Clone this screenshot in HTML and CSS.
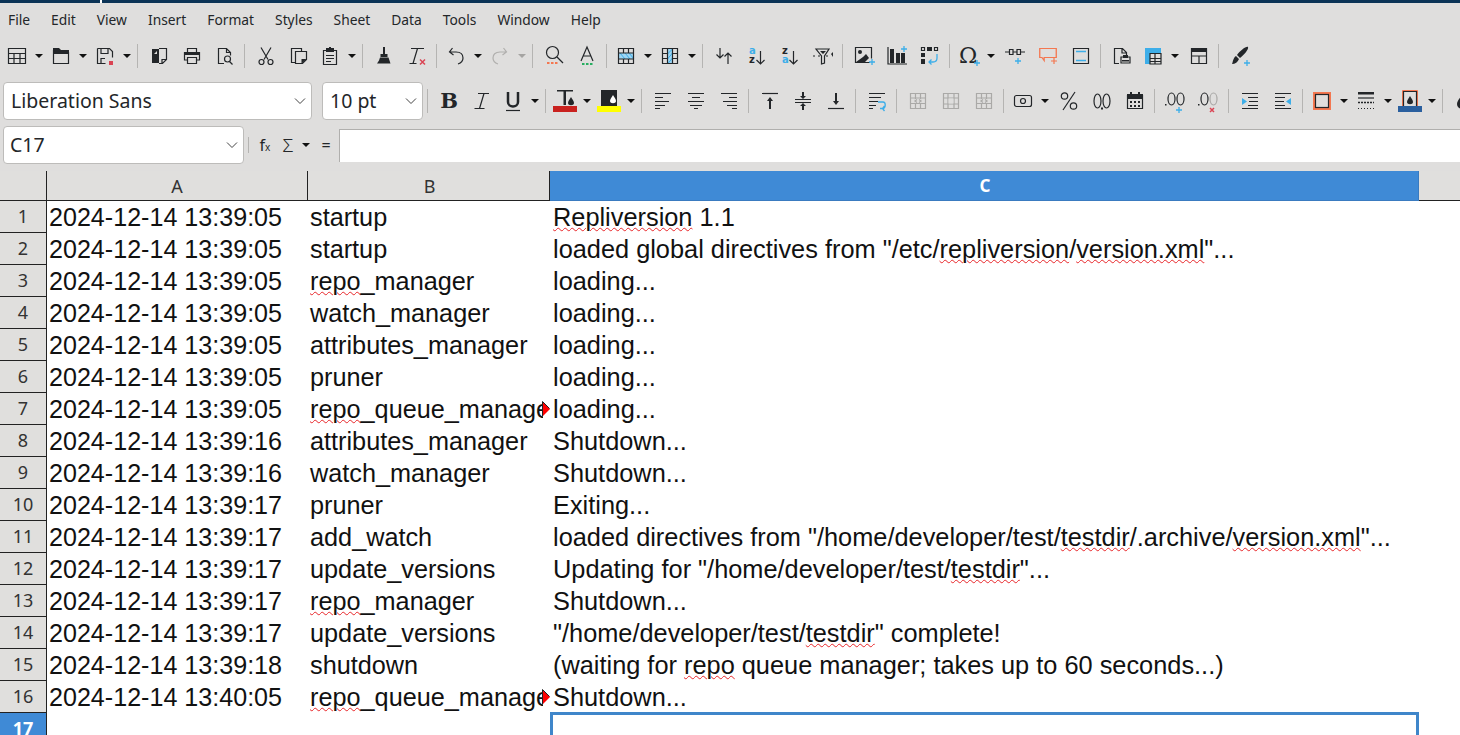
FILE: index.html
```html
<!doctype html>
<html>
<head>
<meta charset="utf-8">
<title>log.csv - Calc</title>
	<link rel="stylesheet" href="styles.css">
</head>

<body>
	<svg class="sprites" width="0" height="0">
		<symbol id="grid" viewBox="0 0 24 24"><path d="M3.500 4.500h17v15h-17zM3.500 9.500h17M3.500 14.500h17M9 9.500v10M15 9.500v10" class="ln"/></symbol>
		<symbol id="open" viewBox="0 0 24 24"><path d="M4 4h6l2 2h8v4H4z" class="dk"/><path d="M4.500 6v13.500h15V8" class="ln"/></symbol>
		<symbol id="save" viewBox="0 0 24 24"><path d="M4.500 4.500h12l3 3v6M4.500 4.500v15h8M8 4.500v5h7v-5M8 19.500v-5h4" class="ln"/><rect x="16" y="17" width="4" height="4" fill="#da4453"/></symbol>
		<symbol id="tmpl" viewBox="0 0 24 24"><path d="M5 5h7v14H5z" class="dk"/><path d="M12 4.500h7.500v11l-4 4H12M19 15.500h-4v4" class="ln"/><path d="M10 7v3H7z" fill="#dfdedd"/></symbol>
		<symbol id="print" viewBox="0 0 24 24"><path d="M7.500 8V4.500h9V8M7.500 16H4.500V8.500h15V16h-3" class="ln"/><path d="M4 8h16v3H4z" class="dk"/><path d="M7.500 13.500h9v6h-9z" class="ln"/></symbol>
		<symbol id="preview" viewBox="0 0 24 24"><path d="M11 19.500H5.500v-15h8l4 4v3M13.500 4.500v4h4" class="ln"/><circle cx="14.500" cy="15" r="3" class="ln"/><path d="M16.500 17.500l3 3" class="ln"/></symbol>
		<symbol id="cut" viewBox="0 0 24 24"><path d="M7 3.500l7 12M17 3.500l-7 12" class="ln"/><circle cx="7.500" cy="18" r="2.500" class="ln"/><circle cx="16.500" cy="18" r="2.500" class="ln"/></symbol>
		<symbol id="copy" viewBox="0 0 24 24"><path d="M8 18.500H4.500v-14h10v3" class="ln"/><path d="M8.500 7.500h11v8l-4 4h-7z" class="ln"/><path d="M19.500 15l-5 5v-5z" class="dk"/></symbol>
		<symbol id="paste" viewBox="0 0 24 24"><path d="M8 6.500H5.500v14h13v-14H16" class="ln"/><path d="M8 4h3V3h2v1h3v4H8z" class="dk"/><path d="M8 11.500h8M8 14.500h8M8 17.500h5" class="ln"/></symbol>
		<symbol id="clone" viewBox="0 0 24 24"><path d="M11 3h2v7h-2zM8.500 10h7v3h-7z" class="dk"/><path d="M8 13.500h8.500l2 6H5l2-3z" class="dk"/></symbol>
		<symbol id="clear" viewBox="0 0 24 24"><path d="M6 4.500h13M12.500 4.500L8 19.500M4.500 19.500h7" class="ln"/><path d="M15 15.500l5 5M20 15.500l-5 5" stroke="#da4453" stroke-width="1.500" fill="none"/></symbol>
		<symbol id="undo" viewBox="0 0 24 24"><path d="M8.500 4L5.500 8l4 3M6 8h6c5 0 7 3 7 6 0 3-2 5-5 6" class="ln"/></symbol>
		<symbol id="redo" viewBox="0 0 24 24"><path d="M15.500 4l3 4-4 3M18 8h-6c-5 0-7 3-7 6 0 3 2 5 5 6" class="ln off"/></symbol>
		<symbol id="find" viewBox="0 0 24 24"><circle cx="10.500" cy="8.500" r="6" class="ln"/><path d="M15 13l6 6" class="ln"/><path d="M5 18h2.500v2H5zM9 18h2.500v2H9zM13 18h2.500v2H13z" fill="#f47750"/></symbol>
		<symbol id="spell" viewBox="0 0 24 24"><path d="M6 17L12 3l6 14M8 12h8" class="ln"/><path d="M7 19h2.500v2H7zM11 19h2.500v2H11zM15 19h2.500v2H15z" fill="#27ae60"/></symbol>
		<symbol id="rowgrid" viewBox="0 0 24 24"><path d="M4 9h16v6H4z" fill="#9fd6f4"/><path d="M6 9l5 6M11 9l5 6M15 9l5 6" stroke="#3daee9" fill="none"/><path d="M4.500 4.500h15v15h-15zM4.500 9h15M4.500 15h15M9.500 4.500V9M14.500 4.500V9M9.500 15v4.500M14.500 15v4.500" class="ln"/></symbol>
		<symbol id="colgrid" viewBox="0 0 24 24"><path d="M9.500 4h5v16h-5z" fill="#9fd6f4"/><path d="M9.500 15l5-6M9.500 10l5-5M9.500 20l5-6" stroke="#3daee9" fill="none"/><path d="M4.500 4.500h15v15h-15zM9.500 4.500v15M14.500 4.500v15M4.500 9.500h5M14.500 9.500h5M4.500 14.500h5M14.500 14.500h5" class="ln"/></symbol>
		<symbol id="sort" viewBox="0 0 24 24"><path d="M8 4v10M4.500 10.500L8 14l3.500-3.500M16 20V9M12.500 12.500L16 9l3.500 3.500" class="ln"/></symbol>
		<symbol id="filter" viewBox="0 0 24 24"><path d="M5 5h13l-4.500 7v7l-3 1v-8z" class="ln"/><path d="M2 12h2M7 12h2M15 12h2" class="ln"/><path d="M9 7l3 3 3-3zM20 10l2-2v5z" class="dk"/></symbol>
		<symbol id="image" viewBox="0 0 24 24"><path d="M18 18.500H3.500v-15h16v11" class="ln"/><circle cx="8" cy="8" r="2" class="dk"/><path d="M4 18l7-5 3-3 3 4-4 4z" class="dk"/><path d="M20 15v6M17 18h6" class="bl"/></symbol>
		<symbol id="chart" viewBox="0 0 24 24"><path d="M3 3v17h19" class="ln"/><path d="M5 5h4v14H5zM11 9h4v10h-4zM16 9h4v10h-4z" class="dk"/><path d="M19 2v6M16 5h6" class="bl"/></symbol>
		<symbol id="pivot" viewBox="0 0 24 24"><path d="M3.500 3.500h3v3h-3zM16.500 3.500h3v3h-3z" class="ln"/><path d="M9 3h5v4H9zM3 9h4v4H3zM3 15h4v5H3z" class="dk"/><path d="M19 10v4c0 3-2 4-4 4h-4M13.500 15.500L11 18l2.500 2.500" class="bl"/></symbol>
		<symbol id="link" viewBox="0 0 24 24"><path d="M2 8h4M18 8h4M10 8h4M6.500 5.500h3.500v5H6.500zM14 5.500h3.500v5H14z" class="ln"/><path d="M15 14v6M12 17h6" class="bl"/></symbol>
		<symbol id="comment" viewBox="0 0 24 24"><path d="M2.500 4.500h15v9h-11v3l-2-3h-2z" fill="none" stroke="#f47750" stroke-width="1.200" transform="translate(1 0) scale(1.100 1)"/><path d="M18 14v6M15 17h6" fill="none" stroke="#f47750" stroke-width="1.200"/></symbol>
		<symbol id="header" viewBox="0 0 24 24"><path d="M4.500 4.500h15v15h-15z" class="ln"/><path d="M7 7.500h10M7 16.500h10" class="bl"/></symbol>
		<symbol id="area" viewBox="0 0 24 24"><path d="M9 19.500H4.500v-15h8l4 4v3M12 4v5h5" class="ln"/><path d="M11 13h9v6h-9z" class="ln"/><path d="M13 11h5v3h-5zM12 16h7v1.500h-7z" class="dk"/></symbol>
		<symbol id="gridfill" viewBox="0 0 24 24"><path d="M4 4h16v5H9v11H4z" fill="#3daee9"/><path d="M9 9.500h11v10.500H9zM9 14.500h11M14 9.500V20M9 17.500h11" class="ln"/></symbol>
		<symbol id="table" viewBox="0 0 24 24"><path d="M4 4h16v4H4z" class="dk"/><path d="M4.500 4.500h15v15h-15zM4.500 12h15M12 12v7.500" class="ln"/></symbol>
		<symbol id="style" viewBox="0 0 24 24"><path d="M20 3c1 2-4 8-8 11l-3-3c3-4 9-9 11-8zM8 12l3 3c-1 3-4 5-7 5 1-2 1-6 4-8z" class="dk"/><path d="M19 16v6M16 19h6" class="bl"/></symbol>
		<symbol id="italic" viewBox="0 0 24 24"><path d="M8 4.500h11M14 4.500L9.500 19.500M4.500 19.500h10" class="ln"/></symbol>
		<symbol id="under" viewBox="0 0 24 24"><path d="M7 3v10c0 6 10 6 10 0V3" fill="none" stroke="#232629" stroke-width="2.500"/><path d="M5 21.500h14" class="ln"/></symbol>
		<symbol id="fontcolor" viewBox="0 0 24 24"><path d="M4 1h16v1.500h-16z M10.500 2h2.500v14h-2.500z" class="dk"/><path d="M18 8c1 2 3 4 3 6 0 3-6 3-6 0 0-2 2-4 3-6z" class="dk"/><rect y="17" width="24" height="6" fill="#c9211e"/></symbol>
		<symbol id="bgcolor" viewBox="0 0 24 24"><path d="M4 1h16v16H4z" class="dk"/><path d="M16 6c1 2 3 4 3 6 0 3-6 3-6 0 0-2 2-4 3-6z" fill="#fff"/><rect y="17" width="24" height="6" fill="#ffff00"/></symbol>
		<symbol id="left" viewBox="0 0 24 24"><path d="M4 4.500h16M4 8.500h8M4 12.500h14M4 16.500h10M4 19.500h5" class="ln"/></symbol>
		<symbol id="center" viewBox="0 0 24 24"><path d="M4 4.500h16M8 8.500h8M4 12.500h16M6 16.500h12M10 19.500h4" class="ln"/></symbol>
		<symbol id="right" viewBox="0 0 24 24"><path d="M4 4.500h16M12 8.500h8M6 12.500h14M10 16.500h10M15 19.500h5" class="ln"/></symbol>
		<symbol id="top" viewBox="0 0 24 24"><path d="M4 4.500h16" class="ln"/><path d="M12 8l-3 4h2v8h2v-8h2z" class="dk"/></symbol>
		<symbol id="middle" viewBox="0 0 24 24"><path d="M4 10.500h16M4 13.500h16" class="ln"/><path d="M11 3h2v4h2l-3 3-3-3h2zM12 14l3 3h-2v4h-2v-4H9z" class="dk"/></symbol>
		<symbol id="bottom" viewBox="0 0 24 24"><path d="M4 19.500h16" class="ln"/><path d="M11 4h2v8h2l-3 4-3-4h2z" class="dk"/></symbol>
		<symbol id="wrap" viewBox="0 0 24 24"><path d="M4 4.500h16M4 8.500h12M4 12.500h9M4 16.500h7M4 19.500h4" class="ln"/><path d="M13 13h5c3 0 3 6 0 6.500h-3M19.500 17l-2 2.500 2 2.500" class="bl"/></symbol>
		<symbol id="merge" viewBox="0 0 24 24"><path d="M4.500 4.500h15v15h-15zM4.500 9h15M4.500 14.500h15M9.500 4.500v15M14.500 4.500v15" class="gr"/><path d="M9 10h6v4H9z" fill="#dfdedd"/><path d="M11 10.500l-2 1.500 2 1.500M13 10.500l2 1.500-2 1.500" class="gr"/></symbol>
		<symbol id="unmerge" viewBox="0 0 24 24"><path d="M4.500 4.500h15v15h-15zM4.500 9h15M4.500 15h15M9 4.500v15M15 4.500v15" class="gr"/><path d="M9.500 9.500h5v5h-5z" fill="#dfdedd"/></symbol>
		<symbol id="currency" viewBox="0 0 24 24"><rect x="3.500" y="6.500" width="17" height="11" rx="2" class="ln"/><circle cx="12" cy="12" r="2.500" class="ln"/></symbol>
		<symbol id="percent" viewBox="0 0 24 24"><path d="M18 3L6 21" class="ln"/><circle cx="7.500" cy="7" r="3.200" class="ln"/><circle cx="16.500" cy="17" r="3.200" class="ln"/></symbol>
		<symbol id="number" viewBox="0 0 24 24"><ellipse cx="7.500" cy="12" rx="3.500" ry="7" class="ln"/><ellipse cx="16.500" cy="12" rx="3.500" ry="7" class="ln"/><rect x="11" y="18.500" width="2" height="2" fill="#232629"/></symbol>
		<symbol id="date" viewBox="0 0 24 24"><path d="M4.500 6.500h15v13h-15z" class="ln"/><path d="M4 5h3V3h2v2h6V3h2v2h3v5H4zM7 12h2v2H7zM11 12h2v2h-2zM15 12h2v2h-2zM7 16h2v2H7zM11 16h2v2h-2zM15 16h2v2h-2z" class="dk"/></symbol>
		<symbol id="addec" viewBox="0 0 24 24"><rect x="1" y="15" width="1.500" height="1.500" fill="#232629"/><ellipse cx="7.500" cy="10" rx="3.500" ry="6" class="ln"/><ellipse cx="16.500" cy="10" rx="3.500" ry="6" class="ln"/><path d="M15 18v6M12 21h6" class="bl"/></symbol>
		<symbol id="deldec" viewBox="0 0 24 24"><rect x="1" y="15" width="1.500" height="1.500" fill="#232629"/><ellipse cx="7.500" cy="10" rx="3.500" ry="6" class="ln"/><ellipse cx="16.500" cy="10" rx="3.500" ry="6" class="gr"/><path d="M13 19l4 4M17 19l-4 4" stroke="#da4453" stroke-width="1.500" fill="none"/></symbol>
		<symbol id="indent" viewBox="0 0 24 24"><path d="M4 4.500h16M10 8.500h10M11 12.500h9M10 16.500h10M4 19.500h16" class="ln"/><path d="M4 9l5 3.500-5 3.500z" fill="#3daee9"/></symbol>
		<symbol id="outdent" viewBox="0 0 24 24"><path d="M4 4.500h16M4 8.500h10M4 12.500h9M4 16.500h10M4 19.500h16" class="ln"/><path d="M20 9l-5 3.500 5 3.500z" fill="#3daee9"/></symbol>
		<symbol id="borders" viewBox="0 0 24 24"><rect x="4" y="4" width="16" height="16" fill="none" stroke="#f47750" stroke-width="2"/><rect x="5.500" y="5.500" width="13" height="13" class="ln"/></symbol>
		<symbol id="bstyle" viewBox="0 0 24 24"><path d="M4 3h16v2.500H4z" class="dk"/><path d="M4 9h16" class="ln"/><path d="M4 13.500h16" stroke="#232629" stroke-width="1.500" stroke-dasharray="2 1" fill="none"/><path d="M4 19.500h16" stroke="#232629" stroke-dasharray="1 2" fill="none"/></symbol>
		<symbol id="bcolor" viewBox="0 0 24 24"><path d="M4.500 1.500h15v17h-15z" fill="none" stroke="#f47750"/><path d="M5.500 2.500h13v15h-13z" class="ln"/><path d="M12 7c1 2 3 4 3 6 0 3-6 3-6 0 0-2 2-4 3-6z" class="dk"/><rect y="17" width="24" height="6" fill="#2a5f9e"/></symbol>
		<symbol id="fill" viewBox="0 0 24 24"><path d="M12 3c2 4 7 8 7 12 0 7-14 7-14 0 0-4 5-8 7-12z" class="dk"/></symbol>
		<symbol id="chev" viewBox="0 0 12 12"><path d="M1 3.500L6 8.500 11 3.500" fill="none" stroke="#444" stroke-width="1"/></symbol>
		<symbol id="more" viewBox="0 0 8 16"><path d="M1 1L8 8 1 15z" fill="#f00"/><path d="M.500 .500V15M.500 .500L7.500 7.500" stroke="#222" fill="none"/></symbol>
		<symbol id="arrow-down" viewBox="0 0 24 24"><path d="M15.500 7v13M11.500 16l4 4 4-4" class="ln"/></symbol>
	</svg>

	<div class="titlebar"><div class="title-left"></div><div class="title-right"></div></div>

	<nav class="menubar">
		<span>File</span><span>Edit</span><span>View</span><span>Insert</span><span>Format</span><span>Styles</span><span>Sheet</span><span>Data</span><span>Tools</span><span>Window</span><span>Help</span>
	</nav>

	<div class="toolbar">
		<svg class="tool"><use href="#grid"/></svg><i class="drop"></i>
		<svg class="tool"><use href="#open"/></svg><i class="drop"></i>
		<svg class="tool"><use href="#save"/></svg><i class="drop"></i>
		<b class="sep"></b>
		<svg class="tool"><use href="#tmpl"/></svg>
		<svg class="tool"><use href="#print"/></svg>
		<svg class="tool"><use href="#preview"/></svg>
		<b class="sep"></b>
		<svg class="tool"><use href="#cut"/></svg>
		<svg class="tool"><use href="#copy"/></svg>
		<svg class="tool tight"><use href="#paste"/></svg><i class="drop"></i>
		<b class="sep"></b>
		<svg class="tool"><use href="#clone"/></svg>
		<svg class="tool"><use href="#clear"/></svg>
		<b class="sep narrow"></b>
		<svg class="tool"><use href="#undo"/></svg><i class="drop"></i>
		<svg class="tool"><use href="#redo"/></svg><i class="drop off"></i>
		<b class="sep"></b>
		<svg class="tool"><use href="#find"/></svg>
		<svg class="tool"><use href="#spell"/></svg>
		<b class="sep narrow"></b>
		<svg class="tool"><use href="#rowgrid"/></svg><i class="drop"></i>
		<svg class="tool"><use href="#colgrid"/></svg><i class="drop"></i>
		<b class="sep"></b>
		<svg class="tool"><use href="#sort"/></svg>
		<svg class="tool" viewBox="0 0 24 24"><text x="4" y="10" class="abc blue">a</text><text x="4" y="19" class="abc">z</text><use href="#arrow-down" width="24" height="24"/></svg>
		<svg class="tool" viewBox="0 0 24 24"><text x="4" y="10" class="abc">z</text><text x="4" y="19" class="abc blue">a</text><use href="#arrow-down" width="24" height="24"/></svg>
		<svg class="tool"><use href="#filter"/></svg>
		<b class="sep"></b>
		<svg class="tool"><use href="#image"/></svg>
		<svg class="tool"><use href="#chart"/></svg>
		<svg class="tool"><use href="#pivot"/></svg>
		<b class="sep narrow"></b>
		<svg class="tool" viewBox="0 0 24 24"><text x="11" y="19" class="sym">Ω</text><path d="M20 16v6M17 19h6" class="bl"/></svg><i class="drop"></i>
		<svg class="tool wide"><use href="#link"/></svg>
		<svg class="tool"><use href="#comment"/></svg>
		<svg class="tool"><use href="#header"/></svg>
		<b class="sep"></b>
		<svg class="tool"><use href="#area"/></svg>
		<svg class="tool tight"><use href="#gridfill"/></svg><i class="drop"></i>
		<svg class="tool wide"><use href="#table"/></svg>
		<b class="sep"></b>
		<svg class="tool"><use href="#style"/></svg>
	</div>

	<div class="toolbar fontbar">
		<div class="select font-name">Liberation Sans<svg class="chev"><use href="#chev"/></svg></div>
		<div class="select font-size">10 pt<svg class="chev"><use href="#chev"/></svg></div>
		<b class="sep"></b>
		<svg class="tool" viewBox="0 0 24 24"><text x="12" y="19" class="letter">B</text></svg>
		<svg class="tool"><use href="#italic"/></svg>
		<svg class="tool tight"><use href="#under"/></svg><i class="drop"></i>
		<b class="sep narrow"></b>
		<svg class="tool"><use href="#fontcolor"/></svg><i class="drop"></i>
		<svg class="tool"><use href="#bgcolor"/></svg><i class="drop"></i>
		<b class="sep"></b>
		<svg class="tool"><use href="#left"/></svg>
		<svg class="tool"><use href="#center"/></svg>
		<svg class="tool"><use href="#right"/></svg>
		<b class="sep"></b>
		<svg class="tool"><use href="#top"/></svg>
		<svg class="tool"><use href="#middle"/></svg>
		<svg class="tool"><use href="#bottom"/></svg>
		<b class="sep"></b>
		<svg class="tool"><use href="#wrap"/></svg>
		<b class="sep"></b>
		<svg class="tool"><use href="#merge"/></svg>
		<svg class="tool"><use href="#unmerge"/></svg>
		<svg class="tool"><use href="#merge"/></svg>
		<b class="sep narrow"></b>
		<svg class="tool"><use href="#currency"/></svg><i class="drop"></i>
		<svg class="tool wide"><use href="#percent"/></svg>
		<svg class="tool"><use href="#number"/></svg>
		<svg class="tool"><use href="#date"/></svg>
		<b class="sep"></b>
		<svg class="tool"><use href="#addec"/></svg>
		<svg class="tool"><use href="#deldec"/></svg>
		<b class="sep"></b>
		<svg class="tool"><use href="#indent"/></svg>
		<svg class="tool"><use href="#outdent"/></svg>
		<b class="sep narrow"></b>
		<svg class="tool"><use href="#borders"/></svg><i class="drop"></i>
		<svg class="tool"><use href="#bstyle"/></svg><i class="drop"></i>
		<svg class="tool"><use href="#bcolor"/></svg><i class="drop"></i>
		<b class="sep"></b>
		<svg class="tool"><use href="#fill"/></svg>
	</div>

	<div class="formulabar">
		<div class="select name-box">C17<svg class="chev"><use href="#chev"/></svg></div>
		<b class="sep"></b>
		<span class="fx">f<small>x</small></span>
		<span class="sigma">Σ</span><i class="drop"></i>
		<span class="equals">=</span>
		<div class="formula-input"></div>
	</div>

	<div class="sheet">
		<div class="row head">
			<div class="corner"></div>
			<div class="col-a col-head">A</div>
			<div class="col-b col-head">B</div>
			<div class="col-c col-head active">C</div>
			<div class="col-rest"></div>
		</div>
		<div class="row"><div class="num">1</div><div class="col-a">2024-12-14 13:39:05</div><div class="col-b">startup</div><div class="col-c"><u>Repliversion</u> 1.1</div></div>
		<div class="row"><div class="num">2</div><div class="col-a">2024-12-14 13:39:05</div><div class="col-b">startup</div><div class="col-c">loaded global directives from "/etc/<u>repliversion</u>/<u>version.xml</u>"...</div></div>
		<div class="row"><div class="num">3</div><div class="col-a">2024-12-14 13:39:05</div><div class="col-b"><u>repo</u>_manager</div><div class="col-c">loading...</div></div>
		<div class="row"><div class="num">4</div><div class="col-a">2024-12-14 13:39:05</div><div class="col-b">watch_manager</div><div class="col-c">loading...</div></div>
		<div class="row"><div class="num">5</div><div class="col-a">2024-12-14 13:39:05</div><div class="col-b">attributes_manager</div><div class="col-c">loading...</div></div>
		<div class="row"><div class="num">6</div><div class="col-a">2024-12-14 13:39:05</div><div class="col-b">pruner</div><div class="col-c">loading...</div></div>
		<div class="row"><div class="num">7</div><div class="col-a">2024-12-14 13:39:05</div><div class="col-b"><div class="clip"><u>repo</u>_queue_manager</div><svg class="more"><use href="#more"/></svg></div><div class="col-c">loading...</div></div>
		<div class="row"><div class="num">8</div><div class="col-a">2024-12-14 13:39:16</div><div class="col-b">attributes_manager</div><div class="col-c">Shutdown...</div></div>
		<div class="row"><div class="num">9</div><div class="col-a">2024-12-14 13:39:16</div><div class="col-b">watch_manager</div><div class="col-c">Shutdown...</div></div>
		<div class="row"><div class="num">10</div><div class="col-a">2024-12-14 13:39:17</div><div class="col-b">pruner</div><div class="col-c">Exiting...</div></div>
		<div class="row"><div class="num">11</div><div class="col-a">2024-12-14 13:39:17</div><div class="col-b">add_watch</div><div class="col-c">loaded directives from "/home/developer/test/<u>testdir</u>/.archive/<u>version.xml</u>"...</div></div>
		<div class="row"><div class="num">12</div><div class="col-a">2024-12-14 13:39:17</div><div class="col-b">update_versions</div><div class="col-c">Updating for "/home/developer/test/<u>testdir</u>"...</div></div>
		<div class="row"><div class="num">13</div><div class="col-a">2024-12-14 13:39:17</div><div class="col-b"><u>repo</u>_manager</div><div class="col-c">Shutdown...</div></div>
		<div class="row"><div class="num">14</div><div class="col-a">2024-12-14 13:39:17</div><div class="col-b">update_versions</div><div class="col-c">"/home/developer/test/<u>testdir</u>" complete!</div></div>
		<div class="row"><div class="num">15</div><div class="col-a">2024-12-14 13:39:18</div><div class="col-b">shutdown</div><div class="col-c">(waiting for <u>repo</u> queue manager; takes up to 60 seconds...)</div></div>
		<div class="row"><div class="num">16</div><div class="col-a">2024-12-14 13:40:05</div><div class="col-b"><div class="clip"><u>repo</u>_queue_manager</div><svg class="more"><use href="#more"/></svg></div><div class="col-c">Shutdown...</div></div>
		<div class="row"><div class="num active">17</div><div class="col-a"></div><div class="col-b"></div><div class="col-c cursor"></div></div>
	</div>
</body>
</html>
```

FILE: styles.css
```css
*{box-sizing: border-box;}
body{
	margin: 0;
	height: 100vh;
	overflow: hidden;
	background-color: #dfdedd;
	color: #232629;
	font-family: "Noto Sans",sans-serif;
}
.sprites{
	position: absolute;
}

/* svg classes shared by the toolbar icons */
.ln{fill: none; stroke: #232629; stroke-width: 1.2;}
.ln.off{stroke: #b0afad;}
.dk{fill: #232629;}
.bl{fill: none; stroke: #3daee9; stroke-width: 1.3;}
.gr{fill: none; stroke: #aaa9a7; stroke-width: 1.2;}
.abc{font: bold 10px "DejaVu Sans",sans-serif; fill: #232629;}
.abc.blue{fill: #3daee9;}
.sym{font: 22px "DejaVu Serif",serif; fill: #232629; text-anchor: middle;}
.letter{font: bold 21px "DejaVu Serif",serif; fill: #232629; text-anchor: middle;}

.titlebar{
	display: flex;
	height: 3px;
	background-color: #fff;
}
.title-left{width: 100px; background-color: #0b3356;}
.title-right{flex: 1; margin-left: 2px; background-color: #0b3356;}

.menubar{
	display: flex;
	align-items: center;
	gap: 21px;
	height: 32px;
	padding-left: 8px;
	font-size: 13.8px;
}

.toolbar{
	display: flex;
	align-items: center;
	height: 42px;
	padding-left: 5px;
	overflow: hidden;
}
.fontbar{
	margin-top: 3px;
	padding-left: 3px;
}
.tool{
	flex: none;
	width: 24px;
	height: 24px;
	overflow: visible;
}
.tool + .tool{margin-left: 9px;}
.tool + .tool.tight{margin-left: 7px;}
.tool + .sep{margin-left: 7px;}
.drop + .tool.wide{margin-left: 2px;}
.drop{
	flex: none;
	display: flex;
	align-items: center;
	justify-content: center;
	width: 20px;
}
.drop::before{
	content: "";
	border-left: 4px solid transparent;
	border-right: 4px solid transparent;
	border-top: 4px solid #111;
}
.drop.off::before{border-top-color: #a5a4a2;}
.sep{
	flex: none;
	width: 1px;
	height: 24px;
	margin-right: 9px;
	background-color: #b5b4b2;
}
.sep.narrow{margin-right: 7px;}

.select{
	flex: none;
	display: flex;
	align-items: center;
	justify-content: space-between;
	height: 38px;
	padding: 0 5px 2px 7px;
	background-color: #fff;
	border: 1px solid #bdbcba;
	border-radius: 4px;
	font-size: 19.5px;
}
.chev{width: 12px; height: 12px; margin-top: 2px;}
.font-name{width: 309px;}
.font-size{width: 101px; margin-left: 10px;}
.font-size + .sep{margin-left: 4px;}
.name-box{width: 241px; padding-left: 6px;}

.formulabar{
	display: flex;
	align-items: center;
	height: 40px;
	margin-top: 3px;
	padding-left: 3px;
}
.name-box + .sep{margin-left: 4px; margin-right: 6px; height: 16px;}
.fx{width: 20px; text-align: center; font-size: 16px;}
.fx small{font-size: 10px;}
.sigma{width: 20px; margin-left: 3px; text-align: center; font-size: 19px; font-weight: 300;}
.formulabar .drop{width: 16px;}
.equals{width: 20px; margin-left: 2px; text-align: center; font-size: 16px;}
.formula-input{
	flex: 1;
	height: 33px;
	margin-left: 3px;
	background-color: #fff;
	border-top: 1px solid #b0afad;
	border-left: 1px solid #b0afad;
}

.sheet{
	margin-top: 6px;
	background-color: #fff;
	font-family: "Liberation Sans",sans-serif;
	font-size: 25px;
	color: #111;
}
.row{
	display: flex;
	height: 32px;
	line-height: 32px;
}
.row > div{
	flex: none;
	padding-left: 2px;
	white-space: nowrap;
}
.row u{
	text-decoration: underline wavy #e8262a 1.2px;
	text-underline-offset: 1px;
}
.row .num{
	width: 47px;
	padding: 0;
	background-color: #e0dfdd;
	border-right: 1px solid #222;
	border-bottom: 1px solid #222;
	font-family: "Noto Sans",sans-serif;
	font-size: 18px;
	line-height: 31px;
	text-align: center;
	color: #333;
}
.row .num.active{
	background-color: #3f8ad6;
	color: #fff;
	font-weight: bold;
}
.head{
	background-color: #e0dfdd;
}
.row.head{height: 30px;}
.row .corner{
	width: 47px;
	padding: 0;
	border-right: 1px solid #222;
	border-bottom: 1px solid #222;
}
.col-a{width: 261px; font-size: 25.1px;}
.col-b{width: 242px; position: relative; font-size: 25.25px;}
.col-c{width: 869px; font-size: 25.35px;}
.row .col-c{padding-left: 3px;}
.row .col-head{
	padding: 0;
	border-right: 1px solid #222;
	border-bottom: 1px solid #222;
	font-family: "Noto Sans",sans-serif;
	font-size: 18px;
	line-height: 30px;
	text-align: center;
	color: #333;
}
.row .col-b.col-head{padding-left: 2px;}
.row .col-head.active{
	padding-left: 2px;
	background-color: #3f8ad6;
	border-color: #3a7bc0;
	color: #fff;
	font-weight: bold;
	font-size: 17px;
}
.row .col-rest{
	flex: 1;
	border-bottom: 1px solid #222;
}
.clip{
	width: 233px;
	overflow: hidden;
}
.more{
	position: absolute;
	right: 0;
	top: 8px;
	width: 8px;
	height: 16px;
}
.row .cursor{
	height: 34px;
	margin-top: -1px;
	border: 3px solid #3f86ca;
}
```
